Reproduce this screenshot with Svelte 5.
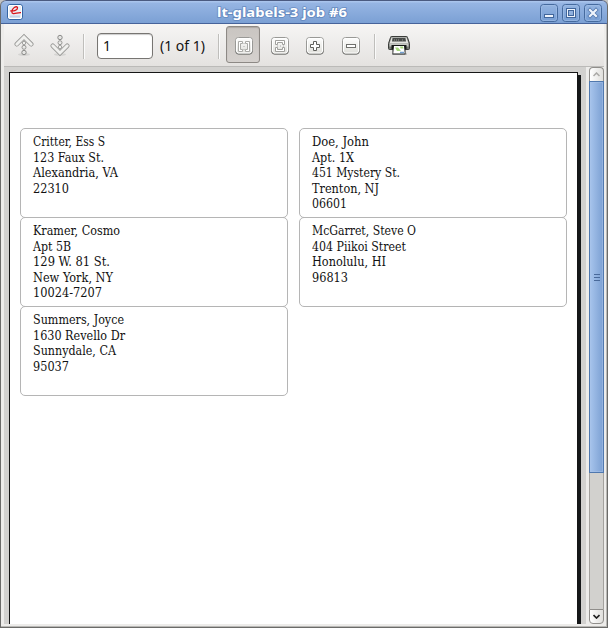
<script>
  const labels = [
    [['Critter, Ess S', 72], ['123 Faux St.', 71], ['Alexandria, VA', 85], ['22310', 36]],
    [['Doe, John', 57], ['Apt. 1X', 42], ['451 Mystery St.', 88], ['Trenton, NJ', 67], ['06601', 35]],
    [['Kramer, Cosmo', 87], ['Apt 5B', 38], ['129 W. 81 St.', 77], ['New York, NY', 80], ['10024-7207', 69]],
    [['McGarret, Steve O', 104], ['404 Piikoi Street', 94], ['Honolulu, HI', 74], ['96813', 36]],
    [['Summers, Joyce', 91], ['1630 Revello Dr', 92], ['Sunnydale, CA', 83], ['95037', 36]]
  ];
  const zooms = ['one', 'fit', 'in', 'out'];
  let page = $state('1');
</script>

<div class="window">
  <header class="titlebar">
    <svg class="appicon" width="16" height="16" viewBox="0 0 16 16">
      <rect x=".5" y=".5" width="15" height="15" rx="2.500" fill="#e9eef5" stroke="#3465a4" />
      <rect x="1.500" y="1.500" width="13" height="13" rx="1.500" fill="none" stroke="#fff" />
      <path d="M3 12.500h10" stroke="#c3d2e8" stroke-width="2" />
      <path d="M3.200 6.800c4 .6 7.300-.8 7.300-2.900c0-1.700-2.300-1.400-3.700 0C4.600 6 4 9.100 6.200 9.600c2.200.5 4.300-1.200 7.800-1" fill="none" stroke="#d8141c" stroke-width="1.300" />
    </svg>
    <h1><svg width="133" height="20"><text x="1" y="15" textLength="130" lengthAdjust="spacingAndGlyphs">lt-glabels-3 job #6</text></svg></h1>
    <div class="controls">
      {#each ['min', 'max', 'close'] as name}
        <button aria-label={name}>
          <svg width="18" height="18" viewBox="0 0 18 18">
            <rect x=".5" y=".5" width="17" height="17" rx="3" fill="url(#ctl)" stroke="#456a9e" />
            <rect x="1.500" y="1.500" width="15" height="15" rx="2" fill="none" stroke="#a3c0e8" opacity=".6" />
            {#if name === 'min'}
              <rect x="4.500" y="10.500" width="9" height="3" fill="#eef4fc" stroke="#41669b" />
            {:else if name === 'max'}
              <rect x="4.500" y="4.500" width="9" height="9" fill="#eef4fc" stroke="#41669b" />
              <rect x="6.500" y="6.500" width="5" height="5" fill="#8fb0de" stroke="#41669b" />
            {:else}
              <path d="M6 6l6 6m0-6l-6 6" stroke="#5579ae" stroke-width="3.800" stroke-linecap="square" />
              <path d="M6 6l6 6m0-6l-6 6" stroke="#eef4fc" stroke-width="2.200" stroke-linecap="square" />
            {/if}
            <defs><linearGradient id="ctl" x2="0" y2="1"><stop stop-color="#94b4e1" /><stop offset="1" stop-color="#759dd3" /></linearGradient></defs>
          </svg>
        </button>
      {/each}
    </div>
  </header>

  <div class="toolbar">
    {#each ['up', 'down'] as dir}
      <button class="arrow" aria-label={dir}>
        <svg width="20" height="24" viewBox="0 0 20 24">
          <ellipse cx="10" cy="21.500" rx="6" ry="1.500" fill="#999" opacity=".25" />
          <g transform={dir === 'down' ? 'matrix(1 0 0 -1 0 24)' : ''}>
            <path d="M2.800 11.200L10 4L17.200 11.200" fill="none" stroke="#989896" stroke-width="4.600" stroke-linecap="round" />
            <path d="M2.800 11.200L10 4L17.200 11.200" fill="none" stroke="#f0f0ee" stroke-width="3" stroke-linecap="round" />
            <circle cx="10" cy="10" r="1.700" fill="#efefed" stroke="#a4a4a2" />
            <circle cx="10" cy="14.300" r="2" fill="#e9e9e7" stroke="#979795" />
            <circle cx="10" cy="19.500" r="2.200" fill="#e5e5e3" stroke="#8b8b89" />
          </g>
        </svg>
      </button>
    {/each}
    <i class="sep"></i>
    <input bind:value={page} aria-label="Page" />
    <span class="count">(1 of 1)</span>
    <i class="sep second"></i>
    {#each zooms as name}
      <button class="zoom" class:active={name === 'one'} aria-label={name}>
        <svg width="18" height="18" viewBox="0 0 18 18">
          <rect x=".8" y="1" width="16.400" height="16.500" rx="3" fill="#aaa" opacity=".6" />
          <rect x=".5" y=".5" width="17" height="16.500" rx="3" fill="url(#key)" stroke="#999996" />
          <path d="M1 14v.5q0 2.500 2.500 2.500h11q2.500 0 2.500-2.500V14" fill="none" stroke="#70706d" />
          <rect x="1.500" y="1.500" width="15" height="14.500" rx="2" fill="none" stroke="#fff" />
          {#if name === 'one'}
            <path d="M3.500 4.500h4v2h-2v6h2v2h-4zM14.500 4.500h-4v2h2v6h-2v2h4z" fill="#fff" stroke="#aaaaa7" />
            <path d="M9 6v1m0 2v1m0 2v1" stroke="#aaa" />
          {:else if name === 'fit'}
            <path d="M4.500 7.500v-4h9v4h-2v-2h-5v2zM4.500 10.500v4h9v-4h-2v2h-5v-2z" fill="#fff" stroke="#a0a09d" />
            <path d="M6 9h1m2 0h1m2 0h1" stroke="#aaa" />
          {:else if name === 'in'}
            <path d="M7.500 4.500h3v3h3v3h-3v3h-3v-3h-3v-3h3z" fill="#fff" stroke="#60605d" />
          {:else}
            <rect x="4.500" y="7.500" width="9" height="3" fill="#fff" stroke="#70706d" />
          {/if}
          <defs><linearGradient id="key" x2="0" y2="1"><stop stop-color="#fff" /><stop offset="1" stop-color="#deded9" /></linearGradient></defs>
        </svg>
      </button>
    {/each}
    <i class="sep third"></i>
    <button class="print" aria-label="Print">
      <svg width="22" height="20" viewBox="0 0 22 20">
        <path d="M4 17h15v2H4z" fill="#777" opacity=".3" />
        <path d="M2.500 1.500q0-1 1-1h15q1 0 1 1l2 6v5q0 1-1 1h-19q-1 0-1-1v-5z" fill="#777974" stroke="#3b3d3a" />
        <path d="M3.500 1.500h15l2 6h-19z" fill="#e4e5e1" />
        <path d="M4.500 2h13l.5 3.500H4z" fill="#484b49" />
        <path d="M6 4h6m2 0h2" stroke="#9a9c98" stroke-dasharray="1 1" />
        <path d="M1.500 7.500h19v3h-19z" fill="#c5c7c2" />
        <path d="M3.500 9h15v4h-1v5.500h-13V13h-1z" fill="#171a18" />
        <path d="M6 10h10l.8 7.500H5.200z" fill="#fff" />
        <path d="M7 11.500h3l3 3.500H9zM12 10.500h3l.5 2h-3z" fill="#a6d77e" />
        <path d="M12 16.500h4" stroke="#729fcf" stroke-width="1.500" />
      </svg>
    </button>
  </div>

  <div class="body">
    <div class="canvas">
      <div class="sheet">
        {#each labels as lines}
          <div class="label">
            {#each lines as [text, width]}
              <svg {width} height="15.600"><text x="0" y="12" textLength={width} lengthAdjust="spacingAndGlyphs">{text}</text></svg>
            {/each}
          </div>
        {/each}
      </div>
      <div class="shadow"></div>
    </div>
    <div class="scrollbar">
      <div class="step top"><svg width="7" height="5" viewBox="0 0 7 5"><path d="M.5 4L3.500 1L6.500 4" fill="none" stroke="#aaa9a6" stroke-width="1.500" /></svg></div>
      <div class="thumb"><i></i><i></i><i></i></div>
      <div class="trough"></div>
      <div class="step bottom"><svg width="7" height="5" viewBox="0 0 7 5"><path d="M.5 1L3.500 4L6.500 1" fill="none" stroke="#222" stroke-width="1.700" /></svg></div>
    </div>
  </div>
</div>

<style>
  :global(body) { background: #c4c4c4; overflow: hidden; }
  * { box-sizing: border-box; }
  svg { display: block; }
  button { padding: 0; border: 0; background: none; display: block; }
  .window { width: 608px; height: 628px; display: flex; flex-direction: column; background: #edecea; border: 1px solid #6b6b69; border-top: 0; border-radius: 6px 6px 0 0; overflow: hidden; box-shadow: inset -1px -1px #b9b8b5; font-family: "Noto Sans", sans-serif; }
  .titlebar { flex: none; height: 24px; margin: 0 -1px; padding: 0 5px 0 7px; display: grid; grid-template-columns: 54px 1fr 62px; border: 1px solid #46639a; border-top-color: #4a5a80; border-radius: 6px 6px 0 0; background: linear-gradient(#a9c4ec 0 1px, #96b5e3 2px, #7ba0d4); }
  .appicon { margin: 3px 0 0 -1px; }
  h1 { margin: 0; padding-left: 154px; font-size: 13px; }
  h1 svg { margin-top: 1px; overflow: visible; }
  h1 text { font: bold 13px "Noto Sans", sans-serif; fill: #fff; paint-order: stroke; stroke: #4f75af; stroke-width: 1.600px; stroke-opacity: .65; }
  .controls { display: flex; gap: 4px; padding-top: 2px; }
  .toolbar { flex: none; height: 43px; display: flex; align-items: center; padding: 0 0 1px 10px; border-bottom: 1px solid #bbbab8; margin: 0 3px; background: linear-gradient(#f6f5f4, #e4e2e0); }
  .arrow { width: 20px; margin-right: 16px; }
  .sep { width: 2px; height: 25px; background: linear-gradient(90deg, #bfbebb 50%, #fafafa 50%); margin: 3px 12px 0 -3px; }
  input { width: 56px; height: 26px; margin-top: 2px; padding: 0 5px; border: 1px solid #777572; border-radius: 4px; background: #fff; font: 14px "Noto Sans", sans-serif; color: #111; box-shadow: inset 0 1px 1px #ccc; }
  .count { width: 48px; margin: 3px 0 0 7px; font-size: 14px; line-height: 20px; letter-spacing: 0; white-space: nowrap; color: #111; }
  .sep.second { margin: 3px 6px 0 10px; }
  .zoom { width: 34px; height: 37px; margin: 0 1.700px 0 0; padding: 2px 0 0 8px; flex: none; border: 1px solid transparent; }
  .zoom.active { border: 1px solid #8d8985; border-radius: 3px; background: linear-gradient(#c9c5c1, #d5d1ce); box-shadow: inset 0 1px 1px #aba7a3; }
  .sep.third { margin: 3px 12px 0 5px; }
  .print { margin-top: 3px; }
  .body { flex: 1; display: flex; min-height: 0; padding: 0 3px 3px 3px; }
  .canvas { width: 582px; display: flex; padding: 5px 0 0 5px; background: #d2d1cf; overflow: hidden; }
  .sheet { width: 569px; flex: none; padding: 55px 10px 0; border: 1px solid #161616; border-bottom: 0; background: #fff; display: grid; grid-template-columns: 268px 268px; grid-auto-rows: 89px; column-gap: 11px; align-content: start; }
  .label { height: 90px; border: 1px solid #b5b5b5; border-radius: 5px; padding: 5px 0 0 12px; }
  .label svg { overflow: visible; }
  .label text { font: 12.500px "DejaVu Serif Condensed", "DejaVu Serif", serif; fill: #111; }
  .shadow { width: 3px; margin-top: 3px; background: #161819; }
  .scrollbar { width: 18px; display: flex; flex-direction: column; padding: 0 0 0 3px; }
  .step { height: 15px; display: grid; place-items: center; border: 1px solid #908e8b; background: linear-gradient(90deg, #fff, #e0dfdc); }
  .top { border-radius: 4px 4px 0 0; border-bottom: 0; height: 14px; }
  .bottom { border-radius: 0 0 4px 4px; }
  .thumb { height: 392px; border: 1px solid #5078ae; background: linear-gradient(90deg, #a7c4ec, #7ca0d3); box-shadow: inset 0 0 0 1px #a9c4ea80; display: flex; flex-direction: column; align-items: center; justify-content: center; gap: 2px; }
  .thumb i { width: 6px; height: 1px; background: #49699a; }
  .trough { flex: 1; border: solid #a3a19e; border-width: 0 1px; background: #d2d1ce; }
</style>
